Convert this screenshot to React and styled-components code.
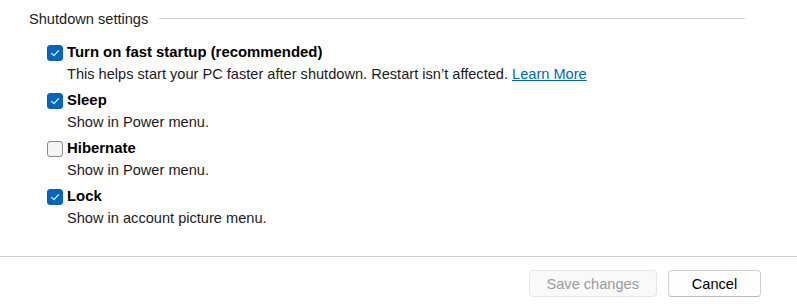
import styled, { createGlobalStyle } from "styled-components";

const GlobalStyle = createGlobalStyle`
  body {
    margin: 0;
    background: #ffffff;
    font-family: "Segoe UI", "Liberation Sans", Arial, sans-serif;
    color: #1a1a1a;
  }
`;

// Options shown under the shutdown header
const options = [
    {
        label: "Turn on fast startup (recommended)",
        desc: "This helps start your PC faster after shutdown. Restart isn’t affected.",
        link: "Learn More",
        checked: true,
    },
    { label: "Sleep", desc: "Show in Power menu.", checked: true },
    { label: "Hibernate", desc: "Show in Power menu.", checked: false },
    { label: "Lock", desc: "Show in account picture menu.", checked: true },
];

const Check = ({ checked }) => (
    <CheckBox checked={checked}>
        {checked && (
            <svg width="10" height="10" viewBox="0 0 10 10">
                <path d="M1.6 5.3 L4 7.6 L8.6 2.6" fill="none" stroke="#fff" strokeWidth="1.1" strokeLinecap="round" strokeLinejoin="round" />
            </svg>
        )}
    </CheckBox>
);

const App = () => {
    return (<Page>
        <GlobalStyle />
        <Header>
            <Title>Shutdown settings</Title>
            <Rule />
        </Header>

        <List>
            {options.map((item, index) => (
                <Item key={index}>
                    <LabelRow>
                        <Check checked={item.checked} />
                        <Label>{item.label}</Label>
                    </LabelRow>
                    <Desc>
                        {item.desc}
                        {item.link && <> <Link href="#">{item.link}</Link></>}
                    </Desc>
                </Item>
            ))}
        </List>

        <Footer>
            <Button disabled>Save changes</Button>
            <Button>Cancel</Button>
        </Footer>
    </Page>)
}

export default App

const Page = styled.div`
  width: 797px;
  height: 307px;
  display: flex;
  flex-direction: column;
  font-size: 14.6px;
`

const Header = styled.div`
  display: flex;
  align-items: center;
  padding: 9px 52px 0 29px;
  height: 20px;
`

const Title = styled.span`
  font-size: 14.6px;
  line-height: 20px;
  color: #1b1b1b;
  white-space: nowrap;
`

const Rule = styled.div`
  flex: 1;
  height: 1px;
  background: #d3d3d3;
  margin-left: 11px;
  margin-top: -1px;
`

const List = styled.div`
  display: flex;
  flex-direction: column;
  gap: 4px;
  padding: 12px 0 0 47px;
`

const Item = styled.div`
  display: flex;
  flex-direction: column;
`

const LabelRow = styled.div`
  display: flex;
  align-items: center;
  gap: 4px;
  height: 22px;
`

const CheckBox = styled.span`
  box-sizing: border-box;
  width: 16px;
  height: 16px;
  border-radius: 3px;
  display: flex;
  align-items: center;
  justify-content: center;
  background: ${p => p.checked ? '#0067c0' : '#f4f4f4'};
  border: 1px solid ${p => p.checked ? '#0067c0' : '#8b8b8b'};
  margin-top: 2px;
`

const Label = styled.span`
  font-weight: bold;
  font-size: 14.9px;
  color: #000;
  line-height: 22px;
`

const Desc = styled.div`
  padding-left: 20px;
  line-height: 22px;
  color: #1b1b1b;
`

const Link = styled.a`
  color: #0067c0;
  text-decoration: underline;
`

const Footer = styled.div`
  box-sizing: border-box;
  margin-top: auto;
  height: 51px;
  border-top: 1px solid #cfcfcf;
  display: flex;
  justify-content: flex-end;
  align-items: flex-start;
  gap: 11px;
  padding: 13px 36px 0 0;
`

const Button = styled.button`
  box-sizing: border-box;
  height: 27px;
  min-width: 93px;
  padding: 0 17px;
  border-radius: 4px;
  font-family: inherit;
  font-size: 14.6px;
  background: ${p => p.disabled ? '#f9f9f9' : '#fdfdfd'};
  color: ${p => p.disabled ? '#9c9c9c' : '#000'};
  border: 1px solid ${p => p.disabled ? '#e6e6e6' : '#d0d0d0'};
  border-bottom-color: ${p => p.disabled ? '#e6e6e6' : '#b8b8b8'};
`
